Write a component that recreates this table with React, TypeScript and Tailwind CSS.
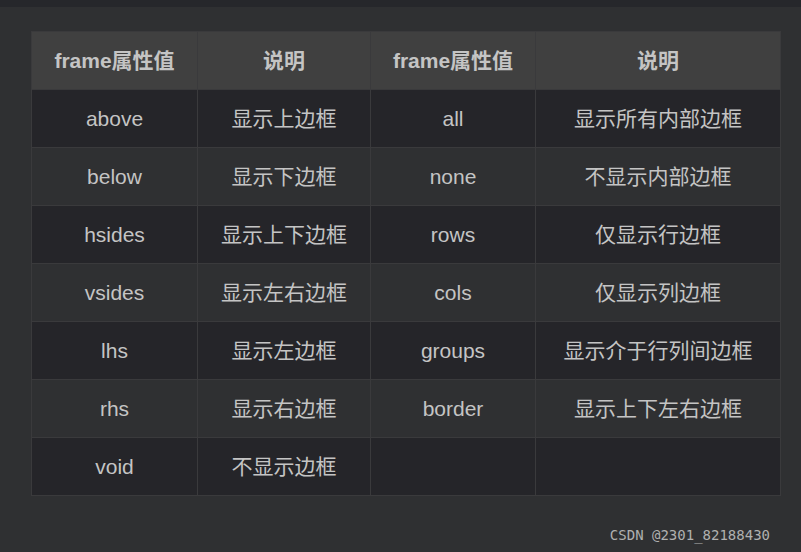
import React from 'react';

const rows: [string, string, string, string][] = [
    ['above', '显示上边框', 'all', '显示所有内部边框'],
    ['below', '显示下边框', 'none', '不显示内部边框'],
    ['hsides', '显示上下边框', 'rows', '仅显示行边框'],
    ['vsides', '显示左右边框', 'cols', '仅显示列边框'],
    ['lhs', '显示左边框', 'groups', '显示介于行列间边框'],
    ['rhs', '显示右边框', 'border', '显示上下左右边框'],
    ['void', '不显示边框', '', ''],
];

const font = { fontFamily: '"Liberation Sans", "Noto Sans CJK SC", sans-serif' };

const App: React.FC = () => {
    return (
        <div className="w-[801px] h-[552px] bg-[#2f3032] flex flex-col overflow-hidden" style={font}>
            <div className="h-[7px] bg-[#26272b]" />
            <div className="pl-[31px] pt-[24px]">
                <table className="table-fixed border-collapse w-[749px] text-[21px] text-[#c4c4c4]">
                    <colgroup>
                        <col className="w-[166px]" />
                        <col className="w-[173px]" />
                        <col className="w-[165px]" />
                        <col className="w-[245px]" />
                    </colgroup>
                    <thead>
                        <tr className="h-[58px] bg-[#404040]">
                            {['frame属性值', '说明', 'frame属性值', '说明'].map((h, i) => (
                                <th key={i} className="border border-[#3a3a3c] font-bold text-center p-0">{h}</th>
                            ))}
                        </tr>
                    </thead>
                    <tbody>
                        {rows.map((r, i) => (
                            <tr key={i} className={`h-[58px] ${i % 2 === 0 ? 'bg-[#252529]' : 'bg-[#2f3032]'}`}>
                                {r.map((c, j) => (
                                    <td key={j} className="border border-[#3a3a3c] text-center p-0">{c}</td>
                                ))}
                            </tr>
                        ))}
                    </tbody>
                </table>
            </div>
            <div className="flex justify-end pr-[31px] pt-[29px]">
                <span className="text-[14px] text-[#b0b0b0]" style={{ fontFamily: '"DejaVu Sans Mono", monospace' }}>CSDN @2301_82188430</span>
            </div>
        </div>
    );
};

export default App;
